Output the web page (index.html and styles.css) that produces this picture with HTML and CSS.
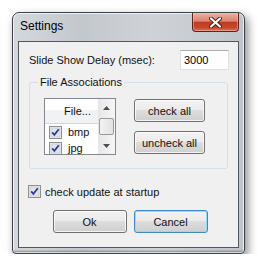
FILE: index.html
```html
<!DOCTYPE html>
<html lang="en">
<head>
    <meta charset="UTF-8">
    <title>Settings</title>
    <link rel="stylesheet" href="styles.css">
</head>
<body>
    <div class="window">
        <div class="titlebar">
            <span class="title">Settings</span>
            <div class="close">
                <svg width="13" height="11" viewBox="0 0 13 11">
                    <path d="M2 1.5 L11 9.5 M11 1.5 L2 9.5" stroke="#4a1a12" stroke-width="4" stroke-linecap="round"/>
                    <path d="M2 1.5 L11 9.5 M11 1.5 L2 9.5" stroke="#fff" stroke-width="2.2" stroke-linecap="round"/>
                </svg>
            </div>
        </div>
        <div class="client">
            <div class="delay-row">
                <label for="delay">Slide Show Delay (msec):</label>
                <input type="text" id="delay" class="textbox" value="3000">
            </div>

            <fieldset class="group">
                <legend>File Associations</legend>
                <div class="group-body">
                    <div class="listbox">
                        <div class="list-main">
                            <div class="list-head">File...</div>
                            <div class="list-row">
                                <svg class="chk" width="13" height="13" viewBox="0 0 13 13">
                                    <rect x="0.5" y="0.5" width="12" height="12" fill="#f4f4f4" stroke="#8e8f8f"/>
                                    <rect x="2" y="2" width="9" height="9" fill="#dfe3ea" stroke="#c2c7cf" stroke-width="0.8"/>
                                    <path d="M3.2 6.3 L5.4 8.8 L9.8 3.2" fill="none" stroke="#2c3e94" stroke-width="1.8"/>
                                </svg>
                                <span>bmp</span>
                            </div>
                            <div class="list-row">
                                <svg class="chk" width="13" height="13" viewBox="0 0 13 13">
                                    <rect x="0.5" y="0.5" width="12" height="12" fill="#f4f4f4" stroke="#8e8f8f"/>
                                    <rect x="2" y="2" width="9" height="9" fill="#dfe3ea" stroke="#c2c7cf" stroke-width="0.8"/>
                                    <path d="M3.2 6.3 L5.4 8.8 L9.8 3.2" fill="none" stroke="#2c3e94" stroke-width="1.8"/>
                                </svg>
                                <span>jpg</span>
                            </div>
                        </div>
                        <div class="scrollbar">
                            <div class="sb-arrow">
                                <svg width="7" height="4" viewBox="0 0 7 4"><path d="M0 4 L3.5 0 L7 4 Z" fill="#4d4d4d"/></svg>
                            </div>
                            <div class="sb-thumb"></div>
                            <div class="sb-space"></div>
                            <div class="sb-arrow">
                                <svg width="7" height="4" viewBox="0 0 7 4"><path d="M0 0 L3.5 4 L7 0 Z" fill="#4d4d4d"/></svg>
                            </div>
                        </div>
                    </div>
                    <div class="group-buttons">
                        <button class="btn">check all</button>
                        <button class="btn">uncheck all</button>
                    </div>
                </div>
            </fieldset>

            <div class="startup-row">
                <svg class="chk" width="13" height="13" viewBox="0 0 13 13">
                    <rect x="0.5" y="0.5" width="12" height="12" fill="#f4f4f4" stroke="#8e8f8f"/>
                    <rect x="2" y="2" width="9" height="9" fill="#dfe3ea" stroke="#c2c7cf" stroke-width="0.8"/>
                    <path d="M3.2 6.3 L5.4 8.8 L9.8 3.2" fill="none" stroke="#2c3e94" stroke-width="1.8"/>
                </svg>
                <span>check update at startup</span>
            </div>

            <div class="footer">
                <button class="btn wide">Ok</button>
                <button class="btn wide default">Cancel</button>
            </div>
        </div>
    </div>
</body>
</html>
```

FILE: styles.css
```css
body {
    margin: 0;
    background: #fff;
    font-family: "Liberation Sans", Arial, sans-serif;
    font-size: 11px;
    color: #111;
    overflow: hidden;
}

/* window frame */
.window {
    width: 221px;
    margin: 12px 0 0 12px;
    padding: 0 5px 5px;
    border: 1px solid #3d4147;
    border-radius: 7px 7px 4px 4px;
    background: linear-gradient(90deg, #d4d8dc 0%, #c3c8ce 30%, #cfd3d8 60%, #bfc5cb 100%);
    box-shadow: 3px 4px 10px rgba(0, 0, 0, 0.45),
        inset 0 0 0 1px rgba(255, 255, 255, 0.7),
        inset 0 -3px 2px -1px rgba(70, 82, 94, 0.55);
}

.titlebar {
    height: 28px;
    display: flex;
    justify-content: space-between;
    align-items: flex-start;
}

.title {
    padding: 6px 0 0 2px;
    font-size: 12px;
    line-height: 14px;
    color: #000;
}

.close {
    width: 47px;
    height: 19px;
    box-sizing: border-box;
    border: 1px solid #5b231a;
    border-top: none;
    border-radius: 0 0 4px 4px;
    background: linear-gradient(180deg, #eab0a3 0%, #d98571 45%, #c23a20 52%, #c5482e 80%, #d7735a 100%);
    box-shadow: inset 0 0 0 1px rgba(255, 200, 190, 0.45);
    display: flex;
    align-items: center;
    justify-content: center;
}

.client {
    height: 205px;
    border: 1px solid #4f5760;
    background: #f0f0f0;
    display: flex;
    flex-direction: column;
}

/* delay row */
.delay-row {
    margin-top: 8px;
    padding: 0 9px 0 10px;
    display: flex;
    justify-content: space-between;
    align-items: center;
}

.textbox {
    width: 49px;
    height: 20px;
    box-sizing: border-box;
    border: 1px solid #dbdfe6;
    border-top-color: #abadb3;
    background: #fff;
    font: inherit;
    padding: 0 3px;
    margin: 0;
}

/* group box */
.group {
    margin: 6px 10px 0;
    padding: 9px 13px 13px 14px;
    border: 1px solid #d5dfe5;
    border-radius: 3px;
    min-width: 0;
}

.group legend {
    margin-left: -6px;
    padding: 0 2px;
    line-height: 13px;
}

.group-body {
    display: flex;
    align-items: flex-start;
    gap: 18px;
}

.listbox {
    width: 72px;
    height: 57px;
    box-sizing: border-box;
    border: 1px solid #828790;
    background: #fff;
    display: flex;
    overflow: hidden;
}

.list-main {
    flex: 1;
    overflow: hidden;
}

.list-head {
    height: 25px;
    box-sizing: border-box;
    border-bottom: 1px solid #d5d5d5;
    background: linear-gradient(180deg, #ffffff 0%, #ffffff 45%, #f1f2f4 46%, #f1f2f4 100%);
    text-align: right;
    padding-right: 7px;
    line-height: 24px;
}

.list-row {
    height: 16px;
    display: flex;
    align-items: center;
    padding-left: 4px;
    gap: 6px;
}

.chk {
    display: block;
    flex-shrink: 0;
}

.scrollbar {
    width: 17px;
    display: flex;
    flex-direction: column;
    background: linear-gradient(90deg, #e6e6e6 0%, #f6f6f6 100%);
}

.sb-arrow {
    height: 17px;
    display: flex;
    align-items: center;
    justify-content: center;
}

.sb-thumb {
    height: 15px;
    margin: 2px 1px 0;
    border: 1px solid #9a9a9a;
    border-radius: 2px;
    background: linear-gradient(90deg, #f2f2f2 0%, #e2e2e2 100%);
}

.sb-space {
    flex: 1;
}

.group-buttons {
    margin-top: 1px;
    display: flex;
    flex-direction: column;
    gap: 9px;
}

/* buttons */
.btn {
    width: 71px;
    height: 23px;
    box-sizing: border-box;
    border: 1px solid #707070;
    border-radius: 3px;
    background: linear-gradient(180deg, #f2f2f2 0%, #ebebeb 48%, #dddddd 50%, #cfcfcf 100%);
    box-shadow: inset 0 0 0 1px rgba(255, 255, 255, 0.75);
    font: inherit;
    color: #111;
    padding: 0;
    margin: 0;
}

.btn.wide {
    width: 74px;
}

.btn.default {
    border-color: #3c8ac8;
    box-shadow: inset 0 0 0 1px #8fdcf8;
}

.startup-row {
    margin: 16px 0 0 9px;
    display: flex;
    align-items: center;
    gap: 4px;
}

.footer {
    margin-top: 12px;
    padding-left: 3px;
    display: flex;
    justify-content: center;
    gap: 7px;
}
```
